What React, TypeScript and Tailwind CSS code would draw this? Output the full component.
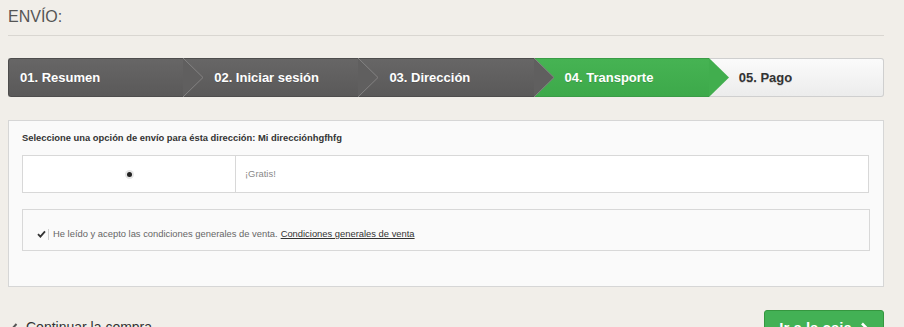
import React from 'react';

const steps = [
  { label: '01. Resumen', state: 'done' },
  { label: '02. Iniciar sesión', state: 'done' },
  { label: '03. Dirección', state: 'done' },
  { label: '04. Transporte', state: 'current' },
  { label: '05. Pago', state: 'todo' },
];

function StepArrow({ fill, edge }: { fill: string; edge?: string }) {
  return (
    <svg className="absolute -top-px left-full z-10 h-[39px] w-[21px]" viewBox="0 0 21 39">
      <polygon points="0,0 20,19.5 0,39" fill={fill} />
      {edge && <polyline points="0,0 20,19.5 0,39" fill="none" stroke={edge} strokeWidth="1" />}
    </svg>
  );
}

function Steps() {
  return (
    <div className="flex h-[39px] font-['Liberation_Sans',Arial,sans-serif] text-[13px] font-bold">
      {steps.map((s, i) => {
        const bg =
          s.state === 'done'
            ? 'bg-gradient-to-b from-[#676666] to-[#5a5959] text-white border-y border-[#4e4d4d]'
            : s.state === 'current'
              ? 'bg-gradient-to-b from-[#46b353] to-[#3da94a] text-white border-y border-[#3a9c46]'
              : 'bg-gradient-to-b from-[#fbfbfb] to-[#ececec] text-[#333] border-y border-r border-[#cfcfcf] rounded-r-[3px]';
        const pad = i === 0 ? 'pl-[11px]' : 'pl-[30px]';
        const sep = i === 0 ? 'border-l border-l-[#4e4d4d] rounded-l-[3px]' : i < 4 ? 'border-l border-l-[#7a7979]' : '';
        return (
          <div key={s.label} className={`relative flex w-1/5 shrink-0 items-center ${bg} ${pad} ${sep}`}>
            <span className="[text-shadow:0_1px_0_rgba(0,0,0,0.15)]">{s.label}</span>
            {s.state === 'done' && <StepArrow fill="#605f5f" edge="#848383" />}
            {s.state === 'current' && <StepArrow fill="#41ae4e" />}
          </div>
        );
      })}
    </div>
  );
}

export default function App() {
  return (
    <div className="h-[327px] w-[904px] overflow-hidden bg-[#f1eee9] font-['Liberation_Sans',Arial,sans-serif] text-[#555]">
      <div className="ml-[8px] mr-[20px]">
        <h1 className="border-b border-[#d9d6d1] pb-[8px] pt-[7px] text-[16px] leading-[20px] text-[#555]">ENVÍO:</h1>

        <div className="mt-[22px]">
          <Steps />
        </div>

        <div className="mt-[23px] border border-[#d6d6d6] bg-[#fafafa] pb-[35px] pl-[13px] pr-[14px] pt-[10px]">
          <p className="text-[9.4px] font-bold leading-[14px] text-[#333]">
            Seleccione una opción de envío para ésta dirección: Mi direcciónhgfhfg
          </p>

          <div className="mt-[10px] flex h-[38px] border border-[#d8d8d8] bg-white">
            <div className="flex w-[213px] items-center justify-center border-r border-[#d8d8d8]">
              <span className="flex h-[9px] w-[9px] items-center justify-center rounded-full bg-[#e6e6e6]">
                <span className="h-[5px] w-[5px] rounded-full bg-[#222]" />
              </span>
            </div>
            <div className="flex items-center pl-[9px] text-[9.4px] text-[#888]">¡Gratis!</div>
          </div>

          <div className="mr-[-1px] mt-[16px] flex h-[42px] items-center border border-[#d8d8d8] bg-[#fafafa] pl-[14px] pt-[8px] text-[9.4px] text-[#666]">
            <svg className="h-[8px] w-[9px]" viewBox="0 0 9 8">
              <path d="M1 4.2 L3.4 6.6 L8 1.4" fill="none" stroke="#333" strokeWidth="1.8" />
            </svg>
            <span className="ml-[2px] mr-[4px] h-[11px] w-px bg-[#d0d0d0]" />
            <span>He leído y acepto las condiciones generales de venta.</span>
            <a className="ml-[3px] text-[#333] underline" href="#">Condiciones generales de venta</a>
          </div>
        </div>

        <div className="mt-[22px] flex items-start justify-between">
          <div className="mt-[8px] flex items-center text-[#333]">
            <svg className="ml-[3px] mr-[8px] h-[10px] w-[7px]" viewBox="0 0 7 10">
              <path d="M5.5 1 L1.8 5 L5.5 9" fill="none" stroke="#555" strokeWidth="2" />
            </svg>
            <span className="text-[14px]">Continuar la compra</span>
          </div>
          <button className="mt-px flex h-[34px] w-[120px] items-center justify-center gap-[8px] rounded-[3px] border border-[#35973f] bg-[#43b155] pt-[2px] text-[15px] font-bold text-white">
            <span>Ir a la caja</span>
            <svg className="h-[12px] w-[9px]" viewBox="0 0 9 12">
              <path d="M2 1.5 L6.5 6 L2 10.5" fill="none" stroke="#fff" strokeWidth="2.6" />
            </svg>
          </button>
        </div>
      </div>
    </div>
  );
}
